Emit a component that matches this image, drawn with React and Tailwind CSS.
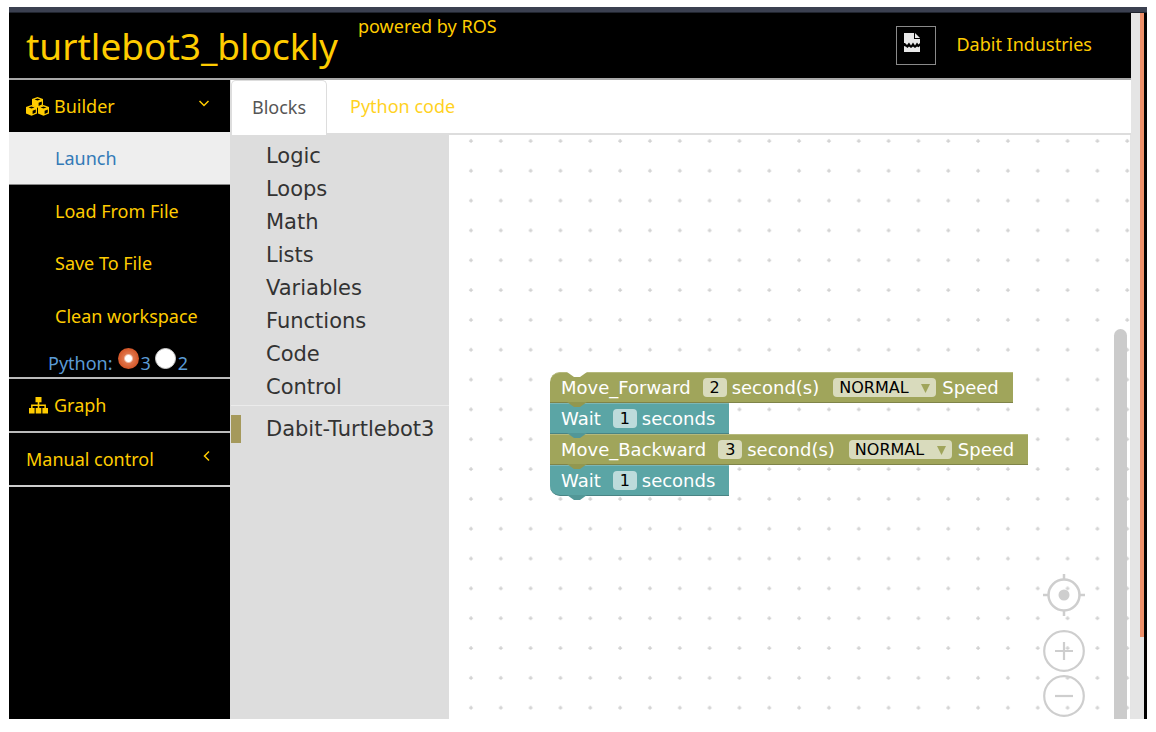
import React from "react";

const categories = ["Logic", "Loops", "Math", "Lists", "Variables", "Functions", "Code", "Control"];

function Cube({ x, y }) {
  return (
    <g transform={`translate(${x} ${y})`}>
      <path d="M5.500 0L11 2v6.500L5.500 10.800 0 8.500V2z" fill="#ffcc00" />
      <path d="M5.500 1.400L8.500 2.500 5.500 3.600 2.500 2.500z" fill="#000" />
      <path d="M6.600 5.800L9.800 4.500v3.100L6.600 9z" fill="#000" />
    </g>
  );
}

function CubesIcon() {
  return (
    <svg width="23" height="19" viewBox="0 0 23 19" aria-hidden="true">
      <Cube x={0} y={8} />
      <Cube x={12} y={8} />
      <Cube x={6} y={0} />
    </svg>
  );
}

function SitemapIcon() {
  return (
    <svg width="19" height="17" viewBox="0 0 19 17" fill="#ffcc00" aria-hidden="true">
      <path d="M6.500 0h6v5.200h-2.200v2.300h6.600v3.500H19V16.500h-5.600V11h2V9h-5.100v2h2v5.500H6.700V11h2V9H3.600v2h2v5.500H0V11h2.100V7.500h6.600V5.200H6.500z" />
    </svg>
  );
}

function Angle({ d }) {
  return (
    <svg width="12" height="12" viewBox="0 0 12 12" fill="none" stroke="currentColor" strokeWidth="1.500" className="mb-[6px]" aria-hidden="true">
      <path d={d} />
    </svg>
  );
}

function BrokenPicture() {
  return (
    <span className="flex h-[39px] w-[40px] border border-[#8a8a8a] pl-[7px] pt-[6px]" role="img" aria-label="Logo">
      <svg width="17" height="19" viewBox="0 0 17 19" fill="#e8e8e8">
        <path d="M0 0h10v6h6v4l-1.500 1.500L13 9.500l-2 3-2-3-2 3-2-3-2 2.500-2-2H0z" />
        <path d="M11 0l5 5h-5z" />
        <path d="M0 13l2 .8 1.500 1.200L5 13.500 7 15l2-1.500 2 1.500 2-1.500 1.500.8L16 13v6H0z" />
      </svg>
    </span>
  );
}

function Header() {
  return (
    <header className="flex h-[67px] shrink-0 items-start justify-between border-b-2 border-[#a8a8a8] bg-black text-[#ffcc00]">
      <div className="flex items-start gap-5 pl-[17px]">
        <h1 className="pt-[11px] text-[37px] leading-[44px]">turtlebot3_blockly</h1>
        <span className="text-[18px] leading-[26px]">powered by ROS</span>
      </div>
      <div className="flex items-center gap-5 pr-[39px] pt-[13px]">
        <BrokenPicture />
        <a href="#dabit" className="pb-1 text-[18px] leading-[34px]">Dabit Industries</a>
      </div>
    </header>
  );
}

function Sidebar() {
  return (
    <nav className="w-[222px] shrink-0 border-r border-[#dddddd] bg-black text-[18px] text-[#ffcc00]">
      <button className="flex h-[52px] w-full items-center pl-[17px] pr-[20px] text-left">
        <CubesIcon />
        <span className="ml-[5px] flex-1">Builder</span>
        <Angle d="M1.500 4L6 8.500 10.500 4" />
      </button>
      <a href="#launch" className="flex h-[53px] items-center border-b border-[#888] bg-[#eeeeee] pl-[46px] text-[#337ab7]">Launch</a>
      <a href="#load" className="flex h-[52px] items-center pl-[46px]">Load From File</a>
      <a href="#save" className="flex h-[53px] items-center pl-[46px]">Save To File</a>
      <a href="#clean" className="flex h-[52px] items-center pl-[46px]">Clean workspace</a>
      <fieldset className="flex h-[37px] items-center border-b-2 border-[#bbbbbb] pb-[2px] pl-[39px] text-[#5b9bd5]">
        <span className="mr-[5px] pt-[10px]">Python:</span>
        <input id="py3" type="radio" name="python" defaultChecked className="h-[21px] w-[21px] appearance-none rounded-full bg-[#dd6b3f] checked:bg-[radial-gradient(circle,#fff_0_3px,#e0764c_5px,#d4582a_10px)]" />
        <label htmlFor="py3" className="ml-[2px] mr-1 pt-[10px]">3</label>
        <input id="py2" type="radio" name="python" className="h-[21px] w-[21px] appearance-none rounded-full border border-[#ccc] bg-white" />
        <label htmlFor="py2" className="ml-[2px] pt-[10px]">2</label>
      </fieldset>
      <a href="#graph" className="flex h-[54px] items-center gap-[6px] border-b-2 border-[#bbbbbb] pl-5">
        <SitemapIcon />
        Graph
      </a>
      <button className="flex h-[54px] w-full items-center justify-between border-b-2 border-[#cccccc] pl-[17px] pr-[17px]">
        Manual control
        <Angle d="M8 1.500L3.500 6 8 10.500" />
      </button>
    </nav>
  );
}

function Toolbox() {
  return (
    <ul className="w-[218px] shrink-0 bg-[#dddddd] pt-[5px] font-['DejaVu_Sans',sans-serif] text-[21px] leading-[33px] text-[#333]">
      {categories.map((name) => (
        <li key={name} className="pl-[35px]">{name}</li>
      ))}
      <li className="mt-px border-t border-[#ebebeb] pt-[9px]">
        <span className="flex h-[28px] items-center border-l-[10px] border-[#a5995b] pl-[25px]">Dabit-Turtlebot3</span>
      </li>
    </ul>
  );
}

function Tab({ className }) {
  return (
    <svg className="absolute left-[17px] top-full z-20" width="20" height="5" viewBox="0 0 20 5" aria-hidden="true">
      <path d="M0 0h20l-7 5H7z" className={className} />
    </svg>
  );
}

function NumberField({ value, label }) {
  return <input aria-label={label} defaultValue={value} className="ml-3 mr-[5px] h-[19px] w-6 rounded-[4px] text-center text-[16px] leading-[19px] text-black" />;
}

function MoveBlock({ label, value, first }) {
  return (
    <div className={"relative flex h-[31px] items-center border-b border-t border-b-[#7f8449] border-t-[#b5b97c] bg-[#a0a55b] pl-[11px] pr-[14px] " + (first ? "rounded-tl-[10px]" : "")}>
      {first && (
        <svg className="absolute -top-px left-[17px]" width="20" height="5" viewBox="0 0 20 5" aria-hidden="true">
          <path d="M0 0h20l-7 5H7z" fill="#fff" />
        </svg>
      )}
      <span>{label}</span>
      <span className="contents [&>input]:bg-[#d9dbbd]"><NumberField label={label + " seconds"} value={value} /></span>
      <span>second(s)</span>
      <span className="relative ml-[14px] mr-[6px] flex h-[19px] items-center">
        <select aria-label={label + " speed"} className="h-[19px] w-[103px] appearance-none rounded-[4px] bg-[#d9dbbd] pl-[6px] text-[16px] leading-[19px] text-black">
          <option>NORMAL</option>
          <option>SLOW</option>
          <option>FAST</option>
        </select>
        <svg className="pointer-events-none absolute right-[6px] top-[6px]" width="9" height="9" viewBox="0 0 9 9" aria-hidden="true">
          <path d="M0 0h9L4.500 9z" fill="#a0a55b" />
        </svg>
      </span>
      <span>Speed</span>
      <Tab className="fill-[#92974f]" />
    </div>
  );
}

function WaitBlock({ last }) {
  return (
    <div className={"relative flex h-[31px] items-center border-b border-t border-b-[#498484] border-t-[#7cb7b7] bg-[#5ba5a5] pl-[11px] pr-[14px] " + (last ? "rounded-bl-[10px]" : "")}>
      <span>Wait</span>
      <span className="contents [&>input]:bg-[#bddbdb]"><NumberField label="Wait seconds" value="1" /></span>
      <span>seconds</span>
      <Tab className="fill-[#529797]" />
    </div>
  );
}

function ZoomControls() {
  return (
    <div className="absolute bottom-[2px] right-[45px] flex flex-col items-center text-[#cecece]">
      <button aria-label="Center" className="mb-[14px]">
        <svg width="42" height="42" viewBox="0 0 42 42" fill="none" stroke="currentColor" strokeWidth="2.500">
          <circle cx="21" cy="21" r="15.500" />
          <path d="M21 0v5M21 37v5M0 21h5M37 21h5" />
          <circle cx="21" cy="21" r="5.500" fill="currentColor" stroke="none" />
        </svg>
      </button>
      <button aria-label="Zoom in" className="mb-[3px]">
        <svg width="42" height="42" viewBox="0 0 42 42" fill="none" stroke="currentColor" strokeWidth="2.200">
          <circle cx="21" cy="21" r="19.800" />
          <path d="M21 12v18M12 21h18" />
        </svg>
      </button>
      <button aria-label="Zoom out">
        <svg width="42" height="42" viewBox="0 0 42 42" fill="none" stroke="currentColor" strokeWidth="2.200">
          <circle cx="21" cy="21" r="19.800" />
          <path d="M12 21h18" />
        </svg>
      </button>
    </div>
  );
}

function Workspace() {
  return (
    <div className="relative min-w-0 flex-1 overflow-hidden border-r border-[#e4e4e4] bg-white">
      <svg className="absolute inset-0 h-full w-full" aria-hidden="true">
        <defs>
          <pattern id="dots" x="7" y="-9" width="29.830" height="29.830" patternUnits="userSpaceOnUse">
            <path d="M13 15h4M15 13v4" stroke="#cccccc" strokeWidth="1.200" />
          </pattern>
        </defs>
        <rect width="100%" height="100%" fill="url(#dots)" />
      </svg>
      <div className="absolute left-[101px] top-[237px] flex flex-col items-start whitespace-nowrap font-['DejaVu_Sans',sans-serif] text-[18px] leading-[22px] text-white">
        <MoveBlock label="Move_Forward" value="2" first />
        <WaitBlock />
        <MoveBlock label="Move_Backward" value="3" />
        <WaitBlock last />
      </div>
      <ZoomControls />
      <div className="absolute bottom-0 right-[3px] top-[194px] w-[13px] rounded-t-full bg-[#cbcbcb]" />
    </div>
  );
}

export default function App() {
  return (
    <div className="flex h-screen flex-col bg-white pb-[13px] pl-[9px] pr-[9px] pt-[7px] font-['Noto_Sans',sans-serif]">
      <div className="h-[6px] shrink-0 border-b border-[#20242e] bg-[#3b4050]" />
      <div className="flex min-h-0 flex-1">
        <div className="flex min-w-0 flex-1 flex-col">
          <Header />
          <div className="flex min-h-0 flex-1">
            <Sidebar />
            <main className="flex min-w-0 flex-1 flex-col">
              <div role="tablist" className="flex h-[55px] shrink-0 border-b-2 border-[#dddddd] text-[18px]">
                <button role="tab" aria-selected="true" className="-mb-[2px] w-[96px] rounded-t-[5px] border border-b-0 border-[#dddddd] bg-white pb-[2px] text-[#555]">Blocks</button>
                <button role="tab" aria-selected="false" className="px-[23px] text-[#ffd21f]">Python code</button>
              </div>
              <div className="flex min-h-0 flex-1">
                <Toolbox />
                <Workspace />
              </div>
            </main>
          </div>
        </div>
        <div className="w-[9px] shrink-0 bg-[#e5e5e5]" />
        <div className="w-[4px] shrink-0 bg-[#e5e5e5] pb-[82px]">
          <div className="h-full bg-[#ee906a]" />
        </div>
        <div className="w-[3px] shrink-0 bg-black" />
      </div>
    </div>
  );
}
